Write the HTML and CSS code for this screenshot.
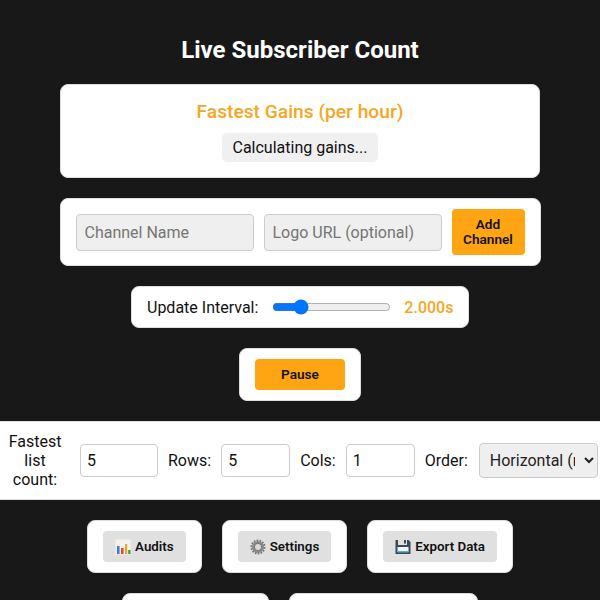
FILE: index.html
```html
<!DOCTYPE html>
<html lang="en">
<head>
  <meta charset="UTF-8" />
  <meta name="viewport" content="width=device-width, initial-scale=1.0"/>
  <title>Live Subscriber Count</title>
  <link rel="stylesheet" href="styles.css">
</head>
<body>
  <h1>Live Subscriber Count</h1>

  <div class="card gains-card">
    <h2>Fastest Gains (per hour)</h2>
    <div class="gains-status">Calculating gains...</div>
  </div>

  <form class="card add-card">
    <input type="text" class="add-input" placeholder="Channel Name" />
    <input type="text" class="add-input" placeholder="Logo URL (optional)" />
    <button type="button" class="btn-primary btn-add">Add Channel</button>
  </form>

  <div class="card interval-card">
    <label class="interval-label" for="interval">Update Interval:</label>
    <input type="range" id="interval" min="0" max="10" step="0.001" value="2" />
    <span class="interval-value">2.000s</span>
  </div>

  <div class="card pause-card">
    <button type="button" class="btn-primary btn-pause">Pause</button>
  </div>

  <div class="layout-row">
    <label class="list-label" for="listCount">Fastest list count:</label>
    <input type="number" id="listCount" class="num-input num-wide" value="5" />
    <label for="rows">Rows:</label>
    <input type="number" id="rows" class="num-input" value="5" />
    <label for="cols">Cols:</label>
    <input type="number" id="cols" class="num-input" value="1" />
    <label for="order">Order:</label>
    <select id="order" class="order-select">
      <option>Horizontal (row-first)</option>
      <option>Vertical (column-first)</option>
    </select>
  </div>

  <div class="tool-row">
    <div class="card tool-card">
      <button type="button" class="btn-tool">
        <svg class="icon" viewBox="0 0 16 16">
          <rect x="0.5" y="0.5" width="15" height="15" fill="#f4f1ea"/>
          <rect x="2" y="7" width="2.6" height="8" fill="#3f7fd8"/>
          <rect x="6" y="9" width="2.6" height="6" fill="#e0483e"/>
          <rect x="10" y="5" width="2.2" height="10" fill="#e9a92f"/>
          <rect x="13.2" y="11" width="2.3" height="4" fill="#3f9a4a"/>
        </svg>
        Audits
      </button>
    </div>
    <div class="card tool-card">
      <button type="button" class="btn-tool">
        <svg class="icon" viewBox="0 0 16 16">
          <circle cx="8" cy="8" r="6" fill="#8b8b8b"/>
          <circle cx="8" cy="8" r="6.6" fill="none" stroke="#777" stroke-width="1.8" stroke-dasharray="1.7 1.25"/>
          <circle cx="8" cy="8" r="3.6" fill="#d9d9d9" stroke="#666" stroke-width="0.8"/>
        </svg>
        Settings
      </button>
    </div>
    <div class="card tool-card">
      <button type="button" class="btn-tool">
        <svg class="icon" viewBox="0 0 16 16">
          <path d="M0.5 1h2.5v5h9V1h1.5l2 2v12h-15z" fill="#3d4a55"/>
          <rect x="2.5" y="8" width="11" height="5" fill="#f4f6f8"/>
          <rect x="2.5" y="12" width="11" height="1.5" fill="#55acdf"/>
          <rect x="9" y="1" width="2" height="3.5" fill="#3d4a55"/>
        </svg>
        Export Data
      </button>
    </div>
    <div class="card tool-card">
      <div class="btn-tool btn-short"></div>
    </div>
    <div class="card tool-card">
      <div class="btn-tool btn-long"></div>
    </div>
  </div>
</body>
</html>
```

FILE: styles.css
```css
* {
  box-sizing: border-box;
  margin: 0;
  padding: 0;
}

body {
  font-family: Roboto, "Liberation Sans", sans-serif;
  background-color: #181818;
  color: #111;
  display: flex;
  flex-direction: column;
  align-items: center;
  padding-top: 36px;
}

h1 {
  font-size: 24px;
  line-height: 28px;
  font-weight: 700;
  color: #fff;
  margin-bottom: 20px;
}

.card {
  background-color: #fff;
  border: 1px solid #ddd;
  border-radius: 8px;
}

.gains-card {
  width: 480px;
  height: 94px;
  margin-bottom: 20px;
  padding-top: 15px;
  display: flex;
  flex-direction: column;
  align-items: center;
}

h2 {
  font-size: 19.2px;
  line-height: 23px;
  font-weight: 500;
  color: #f5a623;
  margin-bottom: 10px;
}

.gains-status {
  background-color: #f0f0f0;
  border-radius: 5px;
  padding: 0 10px;
  font-size: 16px;
  line-height: 29px;
}

.add-card {
  width: 481px;
  height: 68px;
  margin-bottom: 20px;
  padding: 0 15px;
  display: flex;
  align-items: center;
  gap: 10px;
}

.add-input {
  width: 178px;
  height: 37px;
  padding: 0 8px;
  background-color: #efefef;
  border: 1px solid #ccc;
  border-radius: 4px;
  font: 16px Roboto, sans-serif;
}

.add-input::placeholder {
  color: #757575;
}

.btn-primary {
  background-color: #ffa514;
  color: #111;
  border: none;
  border-radius: 4px;
  font: 600 13.6px/15px Roboto, sans-serif;
}

.btn-add {
  width: 73px;
  height: 46px;
}

.interval-card {
  width: 338px;
  height: 42px;
  margin-bottom: 20px;
  padding-left: 15px;
  display: flex;
  align-items: center;
  font-size: 16px;
}

.interval-label {
  white-space: nowrap;
}

#interval {
  width: 119px;
  flex: none;
  margin: 0 13px 0 14px;
  accent-color: #0075ff;
}

.interval-value {
  color: #f5a623;
  font-weight: 500;
}

.pause-card {
  width: 122px;
  height: 53px;
  margin-bottom: 20px;
  display: flex;
  align-items: center;
  justify-content: center;
}

.btn-pause {
  width: 90px;
  height: 31px;
}

.layout-row {
  width: 100%;
  height: 79px;
  margin-bottom: 20px;
  padding-left: 1px;
  background-color: #fff;
  border-top: 1px solid #ddd;
  border-bottom: 1px solid #ddd;
  display: flex;
  align-items: center;
  gap: 10px;
  font-size: 16px;
}

.list-label {
  width: 68px;
  margin-right: 1px;
  line-height: 19px;
  text-align: center;
}

.num-input {
  width: 69px;
  height: 33px;
  padding: 0 6px;
  border: 1px solid #ccc;
  border-radius: 4px;
  font: 16px Roboto, sans-serif;
  color: #111;
  appearance: textfield;
}

.num-wide {
  width: 78px;
}

.order-select {
  width: 119px;
  height: 35px;
  margin-left: 1px;
  padding: 0 6px;
  background-color: #efefef;
  border: 1px solid #ccc;
  border-radius: 4px;
  font: 16px Roboto, sans-serif;
  color: #222;
}

.tool-row {
  width: 100%;
  max-width: 500px;
  display: flex;
  flex-wrap: wrap;
  justify-content: center;
  gap: 20px;
}

.tool-card {
  padding: 10px 15px;
}

.btn-tool {
  height: 31px;
  padding: 0 12px;
  background-color: #e0e0e0;
  color: #111;
  border: none;
  border-radius: 4px;
  font: 600 13.33px Roboto, sans-serif;
  display: flex;
  align-items: center;
  gap: 4px;
}

.icon {
  width: 16px;
  height: 16px;
}

.btn-short {
  width: 115px;
}

.btn-long {
  width: 157px;
}
```
